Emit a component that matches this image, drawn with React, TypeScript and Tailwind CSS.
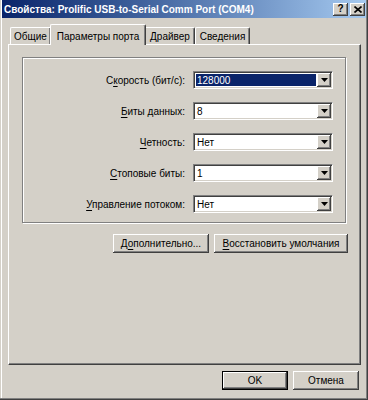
import React from 'react';

const raised =
  'shadow-[inset_-1px_-1px_#404040,inset_1px_1px_#ffffff,inset_-2px_-2px_#808080,inset_2px_2px_#d4d0c8]';

function Acc({ text, at }: { text: string; at: number }) {
  return (
    <>
      {text.slice(0, at)}
      <span className="underline underline-offset-[2px]">{text.charAt(at)}</span>
      {text.slice(at + 1)}
    </>
  );
}

function Combo({ value, selected }: { value: string; selected?: boolean }) {
  return (
    <div className="flex w-[140px] h-[18px] p-px bg-white border border-[#808080] border-r-white border-b-white shadow-[inset_1px_1px_#404040,inset_-1px_-1px_#d4d0c8]">
      <div className="flex-1 flex p-px">
        {selected ? (
          <span className="flex-1 flex items-center pl-[1px] bg-[#0a246a] text-white">{value}</span>
        ) : (
          <span className="flex-1 flex items-center pl-[1px] text-black">{value}</span>
        )}
      </div>
      <div className={`w-[14px] h-full bg-[#d4d0c8] flex items-center justify-center ${raised}`}>
        <svg width="7" height="4" viewBox="0 0 7 4">
          <path d="M0 0h7L3.5 4z" fill="#000" />
        </svg>
      </div>
    </div>
  );
}

function Row({ label, at, value, selected }: { label: string; at: number; value: string; selected?: boolean }) {
  return (
    <div className="flex items-center h-[18px]">
      <div className="w-[162px] text-right">
        <Acc text={label} at={at} />
      </div>
      <div className="ml-[8px]">
        <Combo value={value} selected={selected} />
      </div>
    </div>
  );
}

function Btn({ children, w, def }: { children: React.ReactNode; w: string; def?: boolean }) {
  return (
    <div
      className={`${w} h-[19px] flex items-center justify-center bg-[#d4d0c8] ${raised} ${def ? 'border border-black' : ''}`}
    >
      {children}
    </div>
  );
}

export default function App() {
  return (
    <div className="w-[368px] h-[400px] bg-[#d4d0c8] flex flex-col text-[10px] text-black font-['Liberation_Sans',Arial,sans-serif] shadow-[inset_-1px_-1px_#404040,inset_-2px_-2px_#808080,inset_1px_0_#d4d0c8,inset_2px_0_#ffffff] overflow-hidden">
      {/* title bar */}
      <div className="mx-[2px] h-[18px] flex items-center justify-between bg-gradient-to-r from-[#0a246a] to-[#a6caf0]">
        <span className="pl-[2px] text-white font-bold text-[10px]">
          Свойства: Prolific USB-to-Serial Comm Port (COM4)
        </span>
        <div className="flex gap-[2px] pr-[1px]">
          <div className={`w-[15px] h-[13px] bg-[#d4d0c8] flex items-center justify-center font-bold text-[10px] leading-none ${raised}`}>
            ?
          </div>
          <div className={`w-[15px] h-[13px] bg-[#d4d0c8] flex items-center justify-center ${raised}`}>
            <svg width="8" height="7" viewBox="0 0 8 7">
              <path d="M0.5 0.5L7.5 6.5M7.5 0.5L0.5 6.5" stroke="#000" strokeWidth="1.6" />
            </svg>
          </div>
        </div>
      </div>

      {/* tabs */}
      <div className="relative z-10 mt-[6px] h-[20px] flex items-start pl-[10px]">
        <div className="mt-[3px] w-[40px] h-[17px] flex items-center justify-center border-t border-l border-white rounded-tl-[2px] shadow-[inset_-1px_0_#808080]">
          Общие
        </div>
        <div className="w-[96px] h-[21px] flex items-start pt-[4px] justify-center bg-[#d4d0c8] border-t border-l border-r border-white border-r-[#404040] rounded-t-[2px] shadow-[inset_-1px_0_#808080]">
          Параметры порта
        </div>
        <div className="mt-[3px] w-[49px] h-[17px] flex items-center justify-center border-t border-r border-white border-r-[#404040] rounded-tr-[2px] shadow-[inset_-1px_0_#808080]">
          Драйвер
        </div>
        <div className="mt-[3px] w-[55px] h-[17px] flex items-center justify-center border-t border-l border-r border-white border-r-[#404040] rounded-t-[2px] shadow-[inset_-1px_0_#808080]">
          Сведения
        </div>
      </div>

      {/* panel */}
      <div className="ml-[8px] w-[353px] h-[321px] flex flex-col border border-white border-r-[#404040] border-b-[#404040] shadow-[inset_-1px_-1px_#808080]">
        <div className="ml-[13px] mt-[12px] w-[324px] h-[166px] flex flex-col gap-[13px] pt-[13px] border border-[#808080] shadow-[inset_1px_1px_#ffffff,1px_1px_#ffffff]">
          <Row label="Скорость (бит/с):" at={1} value="128000" selected />
          <Row label="Биты данных:" at={0} value="8" />
          <Row label="Четность:" at={0} value="Нет" />
          <Row label="Стоповые биты:" at={0} value="1" />
          <Row label="Управление потоком:" at={0} value="Нет" />
        </div>
        <div className="mt-[11px] flex justify-end gap-[5px] pr-[12px]">
          <Btn w="w-[96px]">
            <span>
              <Acc text="Дополнительно..." at={1} />
            </span>
          </Btn>
          <Btn w="w-[134px]">
            <span>
              <Acc text="Восстановить умолчания" at={0} />
            </span>
          </Btn>
        </div>
      </div>

      {/* dialog buttons */}
      <div className="mt-[6px] flex justify-end gap-[5px] pr-[9px]">
        <Btn w="w-[66px]" def>
          OK
        </Btn>
        <Btn w="w-[66px]">Отмена</Btn>
      </div>
    </div>
  );
}
